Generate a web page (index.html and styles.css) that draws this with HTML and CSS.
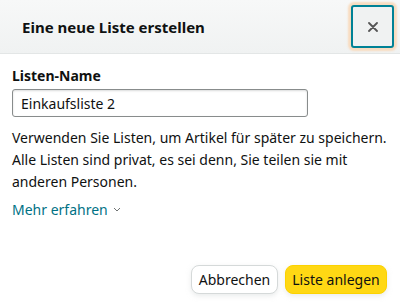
FILE: index.html
```html
<!DOCTYPE html>
<html lang="de">
<head>
  <meta charset="UTF-8">
  <meta name="viewport" content="width=device-width, initial-scale=1.0">
  <title>Eine neue Liste erstellen</title>
  <link rel="stylesheet" href="styles.css">
</head>
<body>
  <div class="modal">
    <!-- Header -->
    <div class="modal-header">
      <h1>Eine neue Liste erstellen</h1>
      <button class="close-btn" aria-label="Schließen">
        <svg width="10" height="10" viewBox="0 0 10 10">
          <path d="M1 1 L9 9 M9 1 L1 9" stroke="#555" stroke-width="1.8" stroke-linecap="round"/>
        </svg>
      </button>
    </div>

    <!-- Body -->
    <div class="modal-body">
      <label class="field-label" for="listName">Listen-Name</label>
      <input type="text" id="listName" class="text-input" value="Einkaufsliste 2">
      <p class="info">Verwenden Sie Listen, um Artikel für später zu speichern. Alle Listen sind privat, es sei denn, Sie teilen sie mit anderen Personen.</p>
      <a class="more-link" href="#">Mehr erfahren
        <svg width="8" height="5" viewBox="0 0 8 5">
          <path d="M1 1 L4 4 L7 1" fill="none" stroke="#6f7373" stroke-width="1"/>
        </svg>
      </a>
    </div>

    <!-- Footer -->
    <div class="modal-footer">
      <button class="btn btn-secondary">Abbrechen</button>
      <button class="btn btn-primary">Liste anlegen</button>
    </div>
  </div>
</body>
</html>
```

FILE: styles.css
```css
/* General Styling */
body {
  margin: 0;
  background-color: #fff;
  color: #0f1111;
  font-family: "Noto Sans", Arial, sans-serif;
}

.modal {
  width: 400px;
  height: 308px;
  display: flex;
  flex-direction: column;
}

/* Header */
.modal-header {
  height: 53px;
  display: flex;
  align-items: center;
  justify-content: space-between;
  padding: 0 6px 0 22px;
  background: linear-gradient(#f7f8f8, #f0f2f2);
  border-bottom: 1px solid #e3e6e6;
}
.modal-header h1 {
  margin: 0;
  font-size: 15px;
  font-weight: 700;
  color: #0f1111;
}
.close-btn {
  width: 43px;
  height: 43px;
  display: flex;
  align-items: center;
  justify-content: center;
  background-color: #f0f2f2;
  border: 2px solid #008296;
  border-radius: 3px;
  box-shadow: 0 0 2px 3px #f8dcc0;
  padding: 0;
}

/* Body */
.modal-body {
  flex: 1;
  padding: 12px 12px 0;
}
.field-label {
  display: block;
  font-size: 14px;
  font-weight: 700;
  line-height: 20px;
  margin-bottom: 3px;
}
.text-input {
  box-sizing: border-box;
  width: 296px;
  height: 28px;
  padding: 0 8px;
  font-family: inherit;
  font-size: 14px;
  color: #0f1111;
  border: 1px solid #888c8c;
  border-radius: 3px;
  box-shadow: 0 1px 2px rgba(15, 17, 17, 0.15) inset;
}
.info {
  margin: 10px 0 0;
  font-size: 14px;
  line-height: 22px;
}
.more-link {
  display: inline-flex;
  align-items: center;
  gap: 5px;
  margin-top: 7px;
  font-size: 14px;
  color: #007185;
  text-decoration: none;
}

/* Footer */
.modal-footer {
  display: flex;
  justify-content: flex-end;
  gap: 7px;
  padding: 0 13px 14px;
}
.btn {
  height: 29px;
  padding: 0 6px;
  font-family: inherit;
  font-size: 14px;
  color: #0f1111;
  border-radius: 8px;
  cursor: pointer;
}
.btn-secondary {
  width: 87px;
  background-color: #fff;
  border: 1px solid #d5d9d9;
  box-shadow: 0 2px 5px rgba(213, 217, 217, 0.5);
}
.btn-primary {
  width: 102px;
  background-color: #ffd814;
  border: 1px solid #fcd200;
  box-shadow: 0 2px 5px rgba(213, 217, 217, 0.5);
}
```
